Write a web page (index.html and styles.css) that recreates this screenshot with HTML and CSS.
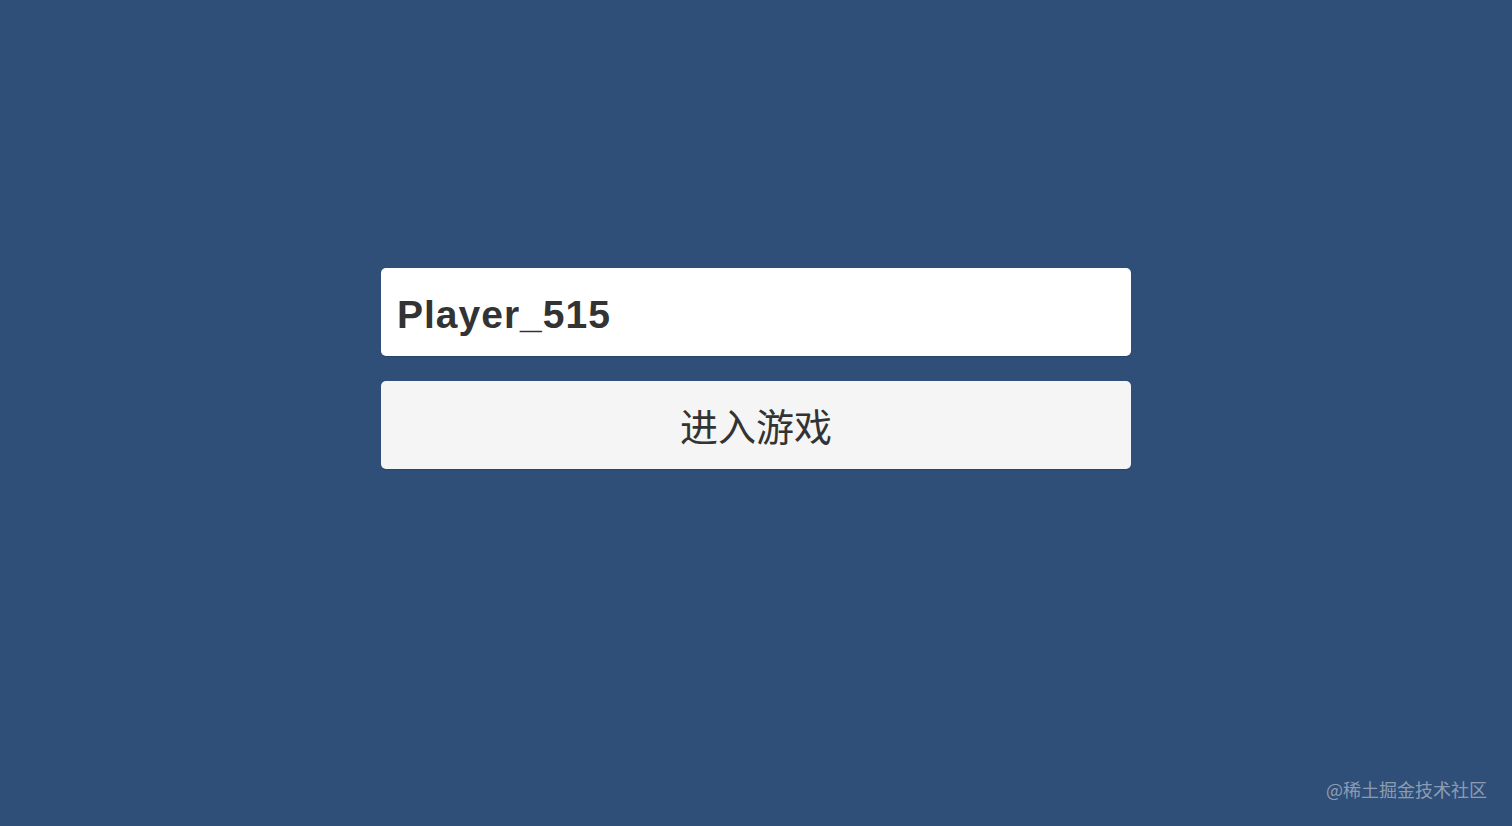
FILE: index.html
```html
<!DOCTYPE html>
<html lang="zh-CN">
<head>
<meta charset="utf-8">
<title>进入游戏</title>
<link rel="stylesheet" href="styles.css">
</head>
<body>
<main class="stage">
  <div class="login">
    <div class="name-field">Player_515</div>
    <button class="enter-btn">进入游戏</button>
  </div>
</main>
<div class="watermark">@稀土掘金技术社区</div>
</body>
</html>
```
FILE: styles.css
```css
html, body {
  margin: 0;
  padding: 0;
  width: 100%;
  height: 100%;
}
body {
  background: #304f78;
  font-family: "Liberation Sans", "Noto Sans CJK SC", sans-serif;
  overflow: hidden;
  position: relative;
}
.stage {
  display: flex;
  justify-content: center;
  padding-top: 268px;
}
.login {
  width: 750px;
  display: flex;
  flex-direction: column;
  gap: 25px;
}
.name-field {
  height: 88px;
  box-sizing: border-box;
  background: #ffffff;
  border-radius: 5px;
  padding: 5px 16px 0;
  display: flex;
  align-items: center;
  font-size: 39px;
  font-weight: bold;
  letter-spacing: 1px;
  color: #333333;
  box-shadow: 0 1px 1px rgba(0,0,0,0.15);
}
.enter-btn {
  height: 88px;
  border: none;
  border-radius: 5px;
  background: #f5f5f5;
  font-family: "Noto Sans CJK SC", sans-serif;
  font-size: 38px;
  color: #333333;
  padding: 0 0 2px;
  display: flex;
  align-items: center;
  justify-content: center;
  box-shadow: 0 1px 1px rgba(0,0,0,0.15);
}
.watermark {
  position: absolute;
  right: 25px;
  bottom: 24px;
  font-family: "Noto Sans CJK SC", sans-serif;
  font-size: 18px;
  color: rgba(255,255,255,0.45);
}
```
